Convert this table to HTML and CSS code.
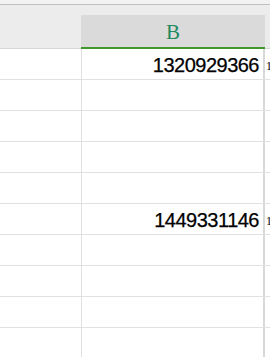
FILE: index.html
```html
<!DOCTYPE html>
<html>
<head>
<meta charset="utf-8">
<link rel="stylesheet" href="styles.css">
</head>
<body>
<div class="sheet">
  <div class="topbar"></div>
  <div class="header">
    <div class="h-a"></div>
    <div class="h-b">B</div>
    <div class="h-c"></div>
  </div>
  <div class="row"><div class="cell a"></div><div class="cell b">1320929366</div><div class="cell c">1</div></div>
  <div class="row"><div class="cell a"></div><div class="cell b"></div><div class="cell c"></div></div>
  <div class="row"><div class="cell a"></div><div class="cell b"></div><div class="cell c"></div></div>
  <div class="row"><div class="cell a"></div><div class="cell b"></div><div class="cell c"></div></div>
  <div class="row"><div class="cell a"></div><div class="cell b"></div><div class="cell c"></div></div>
  <div class="row"><div class="cell a"></div><div class="cell b">1449331146</div><div class="cell c">1</div></div>
  <div class="row"><div class="cell a"></div><div class="cell b"></div><div class="cell c"></div></div>
  <div class="row"><div class="cell a"></div><div class="cell b"></div><div class="cell c"></div></div>
  <div class="row"><div class="cell a"></div><div class="cell b"></div><div class="cell c"></div></div>
  <div class="row"><div class="cell a"></div><div class="cell b"></div><div class="cell c"></div></div>
</div>
</body>
</html>
```
FILE: styles.css
```css
html, body {
  margin: 0;
  padding: 0;
  background: #ffffff;
}
.sheet {
  width: 270px;
  height: 357px;
  overflow: hidden;
  font-family: "Liberation Sans", Arial, sans-serif;
}
.topbar {
  height: 4px;
  background: #f2f2f2;
  border-bottom: 1px solid #bfbfbf;
}
.header {
  display: flex;
  height: 44px;
  background: #ececec;
}
.h-a {
  width: 81px;
  flex: none;
  box-sizing: border-box;
  border-bottom: 1px solid #d6d6d6;
}
.h-b {
  width: 184px;
  flex: none;
  box-sizing: border-box;
  margin-top: 10px;
  height: 34px;
  background: #dadada;
  border-bottom: 2px solid #43962b;
  text-align: center;
  font-family: "Liberation Serif", "Times New Roman", serif;
  font-size: 21px;
  line-height: 34px;
  color: #1f8a5e;
}
.h-c {
  flex: 1;
  box-sizing: border-box;
  border-bottom: 1px solid #d6d6d6;
}
.row {
  display: flex;
  height: 31px;
  box-sizing: border-box;
  border-bottom: 1px solid #e1e1e1;
}
.cell {
  height: 30px;
  box-sizing: border-box;
  line-height: 32px;
  white-space: nowrap;
  overflow: hidden;
}
.a {
  width: 82px;
  flex: none;
  border-right: 1px solid #e1e1e1;
}
.b {
  width: 183px;
  flex: none;
  border-right: 2px solid #d8d8d8;
  text-align: right;
  padding-right: 4px;
  font-size: 20px;
  letter-spacing: -0.5px;
  color: #000000;
  -webkit-text-stroke: 0.25px #000000;
}
.c {
  flex: 1;
  padding-left: 1px;
  font-family: "Liberation Serif", "Times New Roman", serif;
  font-size: 12px;
  color: #000000;
  line-height: 34px;
}
```
